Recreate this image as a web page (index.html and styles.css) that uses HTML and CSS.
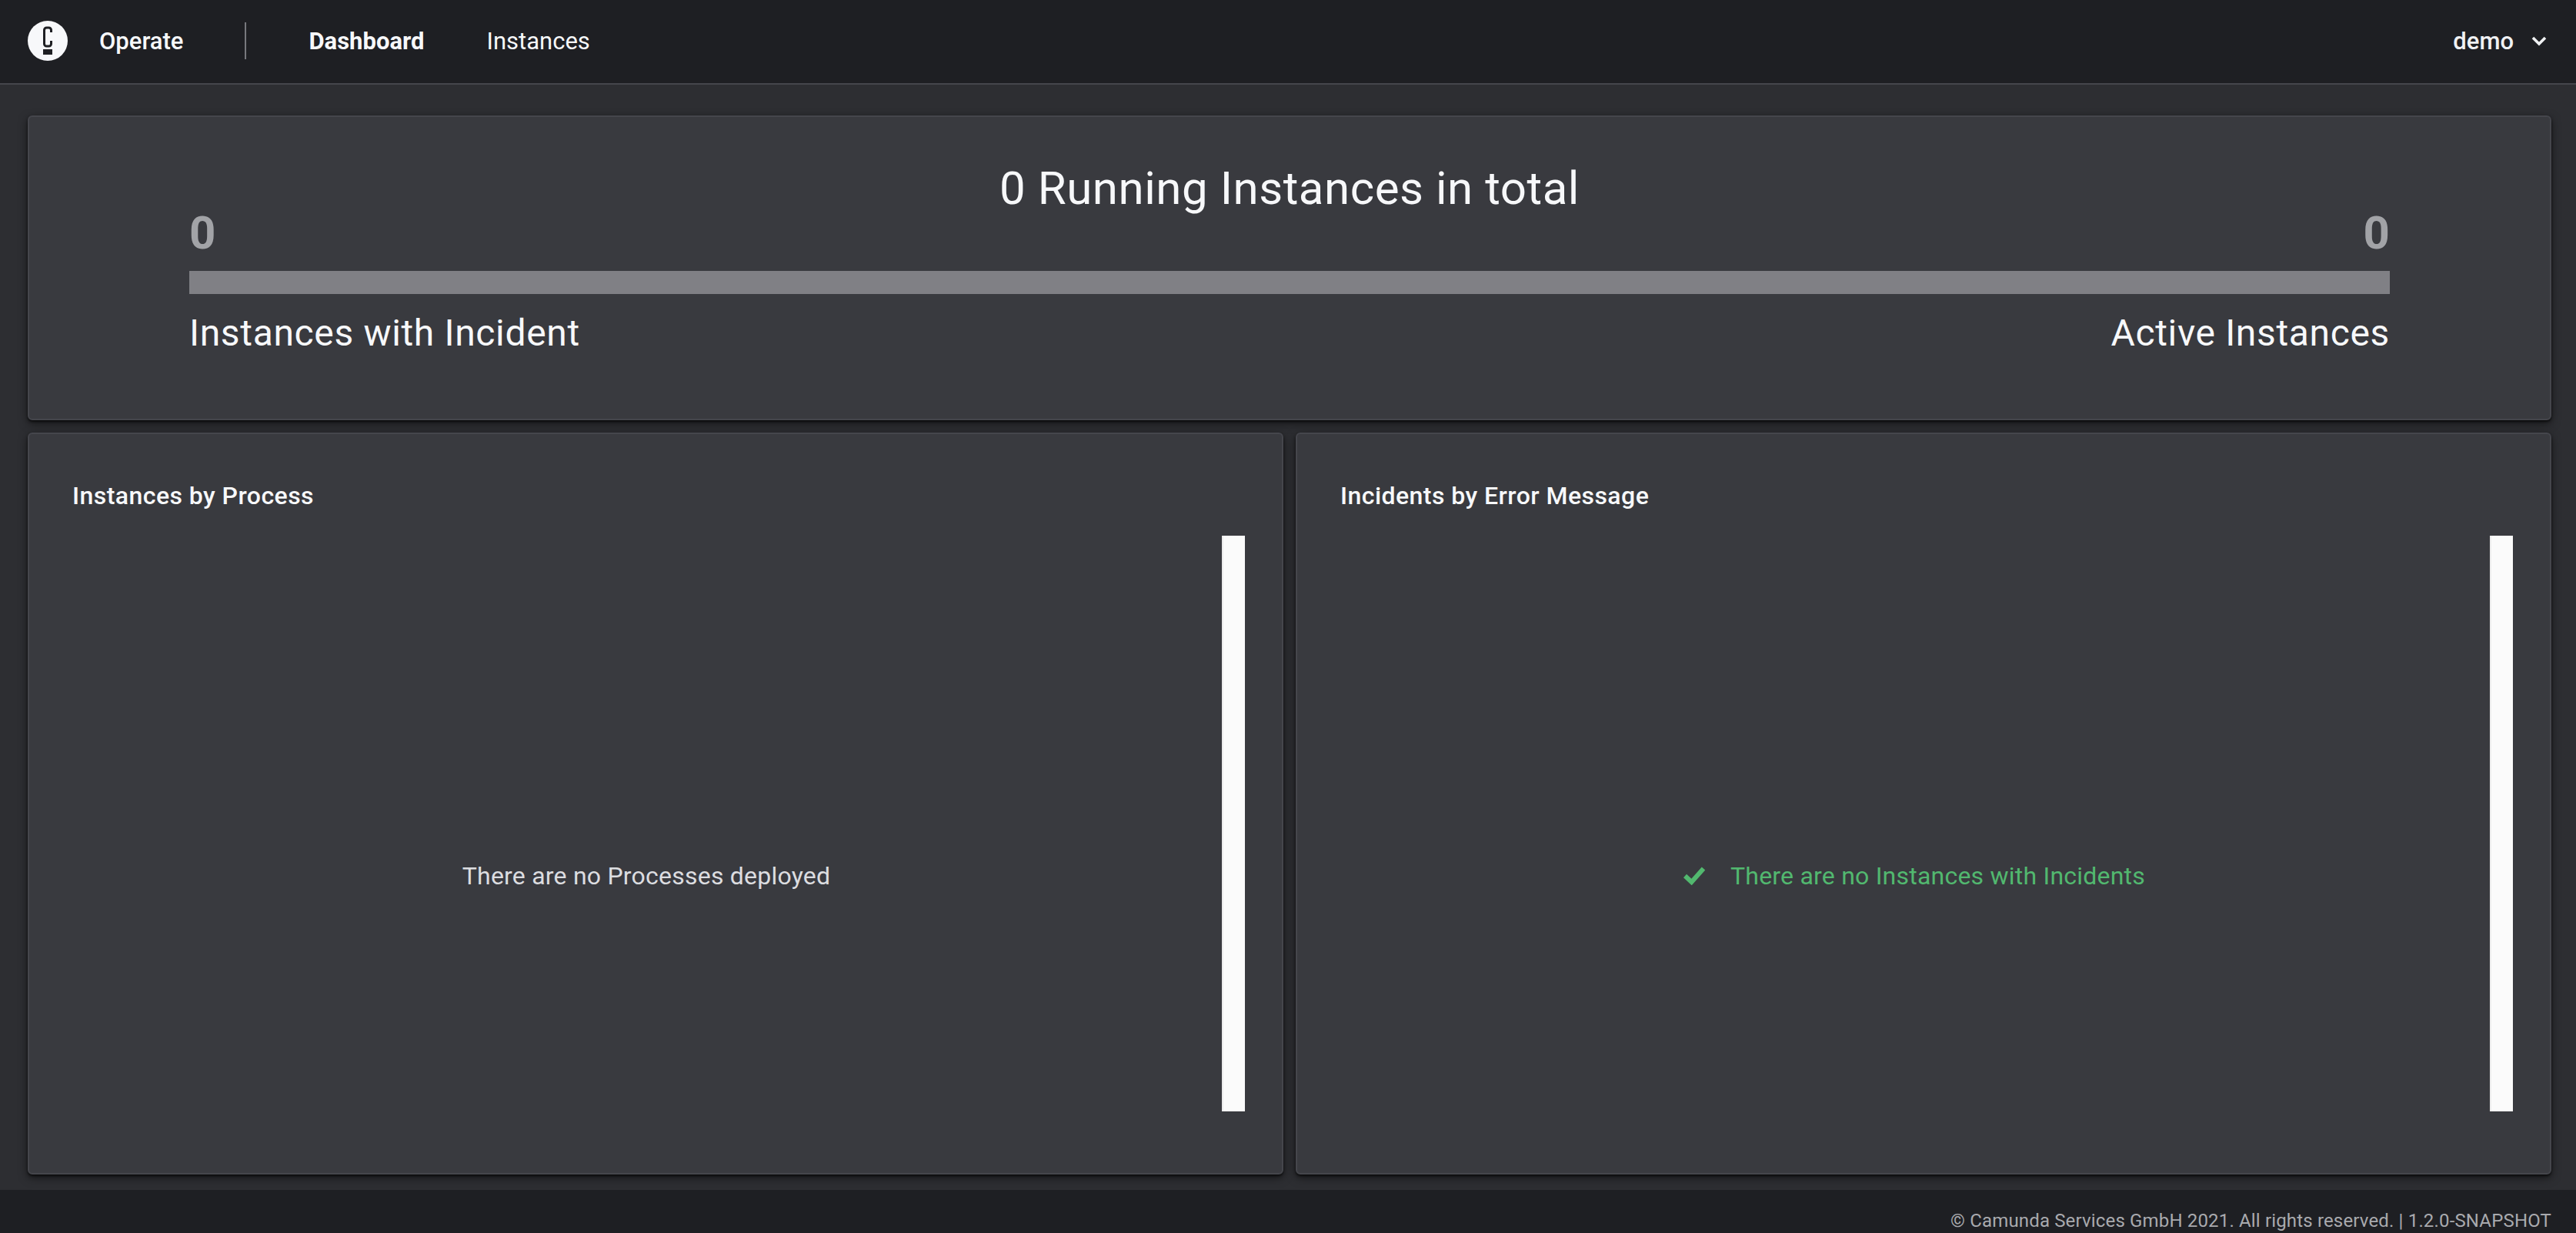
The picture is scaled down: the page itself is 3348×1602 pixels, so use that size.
FILE: index.html
```html
<!DOCTYPE html>
<html lang="en">

<head>
  <meta charset="UTF-8">
  <title>Camunda Operate</title>
  <link rel="stylesheet" href="styles.css">
</head>

<body>

  <header class="topbar">
    <svg class="logo" viewBox="0 0 52 52">
      <circle cx="26" cy="26" r="26" fill="#f7f8fa" />
      <path d="M30.5 15 V12 a3 3 0 0 0 -3 -3 h-3 a3 3 0 0 0 -3 3 V30 a3 3 0 0 0 3 3 h3 a3 3 0 0 0 3 -3 V26"
        fill="none" stroke="#1e1f23" stroke-width="3" />
      <rect x="20" y="37" width="12" height="7" fill="#1e1f23" />
    </svg>
    <span class="brand">Operate</span>
    <span class="divider"></span>
    <a class="nav-link active">Dashboard</a>
    <a class="nav-link">Instances</a>
    <div class="user">
      <span>demo</span>
      <svg class="chevron" viewBox="0 0 20 14">
        <path d="M2 3 L10 11 L18 3" fill="none" stroke="#f0f1f3" stroke-width="3.6" />
      </svg>
    </div>
  </header>

  <main class="content">
    <section class="panel summary">
      <h1 class="summary-title">0 Running Instances in total</h1>
      <div class="summary-row counts">
        <span>0</span>
        <span>0</span>
      </div>
      <div class="summary-bar"></div>
      <div class="summary-row labels">
        <span>Instances with Incident</span>
        <span>Active Instances</span>
      </div>
    </section>

    <div class="columns">
      <section class="panel card">
        <h2 class="card-title">Instances by Process</h2>
        <div class="card-body">
          <div class="message">There are no Processes deployed</div>
          <div class="scroll-thumb"></div>
        </div>
      </section>
      <section class="panel card">
        <h2 class="card-title">Incidents by Error Message</h2>
        <div class="card-body">
          <div class="message success">
            <svg class="check" viewBox="0 0 28 24">
              <path d="M2 12 L10.5 20 L26 2.5" fill="none" stroke="#52b86f" stroke-width="6" />
            </svg>
            <span>There are no Instances with Incidents</span>
          </div>
          <div class="scroll-thumb"></div>
        </div>
      </section>
    </div>
  </main>

  <footer class="bottombar">© Camunda Services GmbH 2021. All rights reserved. | 1.2.0-SNAPSHOT</footer>

</body>

</html>
```

FILE: styles.css
```css
html,
body {
  height: 100%;
}

body {
  margin: 0;
  display: flex;
  flex-direction: column;
  background-color: #2d2e32;
  color: #f7f8fa;
  font-family: Roboto, "Noto Sans", sans-serif;
  overflow: hidden;
}

/* top bar */
.topbar {
  box-sizing: border-box;
  flex: none;
  height: 110px;
  padding: 0 38px 2px 36px;
  display: flex;
  align-items: center;
  background-color: #1e1f23;
  border-bottom: 2px solid #45464c;
  font-size: 31px;
}

.logo {
  width: 52px;
  height: 52px;
  flex: none;
}

.brand {
  margin-left: 41px;
  font-weight: 500;
}

.divider {
  width: 2px;
  height: 48px;
  margin: 0 81px 0 80px;
  background-color: #77787d;
}

.nav-link {
  margin-right: 81px;
}

.nav-link.active {
  font-weight: 700;
}

.user {
  margin-left: auto;
  display: flex;
  align-items: center;
  gap: 23px;
  font-weight: 500;
  color: #f0f1f3;
}

.chevron {
  width: 20px;
  height: 14px;
}

/* main area */
.content {
  flex: 1;
  min-height: 0;
  padding: 40px 32px 20px 36px;
  display: flex;
  flex-direction: column;
  gap: 16px;
}

.panel {
  box-sizing: border-box;
  background-color: #393a3f;
  border: 2px solid #45464c;
  border-radius: 6px;
  box-shadow: 0 2px 3px rgba(0, 0, 0, 0.6), 0 4px 12px rgba(0, 0, 0, 0.55);
}

.summary {
  flex: none;
  height: 396px;
  padding: 60px 208px 0;
}

.summary-title {
  margin: 0;
  height: 70px;
  line-height: 66px;
  text-align: center;
  font-size: 60px;
  font-weight: 400;
  letter-spacing: 0.54px;
}

.summary-row {
  display: flex;
  justify-content: space-between;
}

.counts {
  height: 42px;
  line-height: 42px;
  font-size: 60px;
  font-weight: 700;
  color: #a2a3a7;
}

.summary-bar {
  height: 30px;
  margin-top: 28px;
  background-color: #808085;
}

.labels {
  margin-top: 21px;
  line-height: 60px;
  font-size: 48px;
  letter-spacing: 0.65px;
}

.columns {
  flex: 1;
  min-height: 0;
  display: flex;
  gap: 16px;
}

.card {
  flex: 1;
  min-width: 0;
  display: flex;
  flex-direction: column;
  padding: 0 48px 80px 54px;
}

.card-title {
  margin: 60px 0 0 2px;
  height: 40px;
  line-height: 40px;
  font-size: 32px;
  font-weight: 500;
  letter-spacing: 0.45px;
}

.card-body {
  flex: 1;
  min-height: 0;
  margin-top: 32px;
  display: flex;
}

.message {
  flex: 1;
  padding-top: 136px;
  display: flex;
  align-items: center;
  justify-content: center;
  gap: 33px;
  font-size: 32px;
  letter-spacing: 0.22px;
  color: #dcdde0;
}

.message.success {
  color: #52b86f;
}

.check {
  width: 28px;
  height: 24px;
  flex: none;
}

.scroll-thumb {
  box-sizing: border-box;
  flex: none;
  width: 30px;
  background-color: #fbfbfb;
  border-left: 2px solid #ececec;
}

/* footer */
.bottombar {
  flex: none;
  box-sizing: border-box;
  height: 56px;
  padding: 24px 32px 0 0;
  background-color: #1e1f23;
  text-align: right;
  line-height: 32px;
  font-size: 24px;
  letter-spacing: 0.16px;
  color: #a9aaae;
}
```
